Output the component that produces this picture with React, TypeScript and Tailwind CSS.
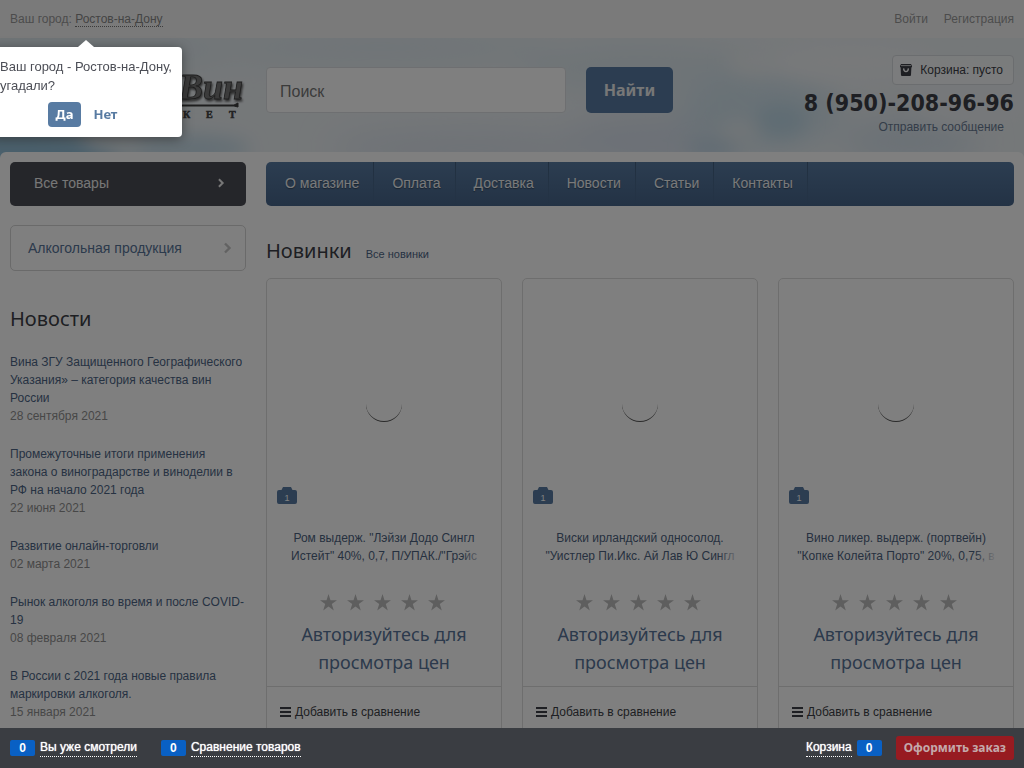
import { FormEvent, useState } from "react";

interface INews {
    title: string;
    date: string;
}
interface IProduct {
    id: number;
    title: string[];
    photos: number;
}

const MENU = ["О магазине", "Оплата", "Доставка", "Новости", "Статьи", "Контакты"];

const NEWS: INews[] = [
    { title: "Вина ЗГУ Защищенного Географического Указания» – категория качества вин России", date: "28 сентября 2021" },
    { title: "Промежуточные итоги применения закона о виноградарстве и виноделии в РФ на начало 2021 года", date: "22 июня 2021" },
    { title: "Развитие онлайн-торговли", date: "02 марта 2021" },
    { title: "Рынок алкоголя во время и после COVID-19", date: "08 февраля 2021" },
    { title: "В России с 2021 года новые правила маркировки алкоголя.", date: "15 января 2021" },
];

const PRODUCTS: IProduct[] = [
    { id: 1, title: ["Ром выдерж. \"Лэйзи Додо Сингл", "Истейт\" 40%, 0,7, П/УПАК./\"Грэйс"], photos: 1 },
    { id: 2, title: ["Виски ирландский односолод.", "\"Уистлер Пи.Икс. Ай Лав Ю Сингл"], photos: 1 },
    { id: 3, title: ["Вино ликер. выдерж. (портвейн)", "\"Копке Колейта Порто\" 20%, 0,75, в"], photos: 1 },
];

const Sky = () => (
    <svg className="absolute inset-0 h-full w-full" viewBox="0 0 1024 124" preserveAspectRatio="none" aria-hidden="true">
        <defs>
            <filter id="soft" x="-50%" y="-100%" width="200%" height="300%"><feGaussianBlur stdDeviation="16" /></filter>
            <filter id="puff" x="-50%" y="-100%" width="200%" height="300%"><feGaussianBlur stdDeviation="9" /></filter>
        </defs>
        <rect width="1024" height="124" fill="#ebf0f3" />
        <g filter="url(#soft)" fill="#dde8ee">
            <ellipse cx="40" cy="20" rx="110" ry="34" />
            <ellipse cx="150" cy="12" rx="80" ry="18" />
            <ellipse cx="380" cy="10" rx="170" ry="16" />
            <ellipse cx="470" cy="112" rx="140" ry="18" fill="#dbe3ed" />
            <ellipse cx="650" cy="105" rx="90" ry="26" fill="#d8e1ed" />
            <ellipse cx="640" cy="30" rx="120" ry="26" />
            <ellipse cx="760" cy="75" rx="80" ry="40" fill="#d2e3ed" />
            <ellipse cx="910" cy="105" rx="70" ry="22" fill="#d5e2ec" />
        </g>
        <g filter="url(#puff)">
            <ellipse cx="10" cy="118" rx="110" ry="24" fill="#94c0d8" />
            <ellipse cx="180" cy="112" rx="70" ry="14" fill="#c6dce8" />
            <ellipse cx="115" cy="104" rx="30" ry="10" fill="#e2e9ec" />
            <ellipse cx="780" cy="84" rx="26" ry="16" fill="#bfd9e7" />
            <ellipse cx="712" cy="112" rx="26" ry="8" fill="#bfd6e6" />
            <ellipse cx="740" cy="95" rx="20" ry="12" fill="#e3ebef" />
            <ellipse cx="755" cy="24" rx="28" ry="14" fill="#ebf0f2" />
            <ellipse cx="970" cy="60" rx="60" ry="30" fill="#edf1f4" />
            <ellipse cx="850" cy="25" rx="80" ry="18" fill="#f0f3f5" />
        </g>
    </svg>
);

const Logo = () => (
    <svg className="block h-[62px] w-[236px]" viewBox="0 0 236 62" role="img" aria-label="Вин кет">
        <g fontFamily="'Liberation Serif', serif" fontWeight="700">
            <text x="169" y="35" fontSize="36" fontStyle="italic" fill="#777" stroke="#3c3c3c" strokeWidth="0.8" className="[filter:drop-shadow(1px_2px_1px_#555)]">Вин</text>
            <g fontSize="10" fill="#444" stroke="#444" strokeWidth="0.5">
                <text x="173" y="54">К</text>
                <text x="196" y="54">Е</text>
                <text x="219" y="54">Т</text>
            </g>
        </g>
        <path d="M120 41H224L228 39V43L224 42H120Z" fill="#3c3c3c" stroke="#3c3c3c" strokeWidth="1" />
    </svg>
);

const BasketIcon = () => (
    <svg className="h-3 w-3" viewBox="0 0 12 12" aria-hidden="true">
        <path d="M1 0H11L12 2V3.2H0V2Z" fill="#3c3e46" />
        <path d="M1 1.6H11" stroke="#fff" strokeWidth="0.7" />
        <path d="M0.6 3H11.4L11 11Q11 12 10 12H2Q1 12 1 11Z" fill="#3c3e46" />
        <path d="M3.6 4.4Q3.8 7.6 6 7.6T8.4 4.4" fill="none" stroke="#fff" strokeWidth="1.3" />
    </svg>
);

const Chevron = ({ className }: { className: string }) => (
    <svg className={className} viewBox="0 0 8 12" fill="none" stroke="currentColor" strokeWidth="2.4" aria-hidden="true">
        <path d="M1.5 1.5L6 6L1.5 10.5" />
    </svg>
);

const Star = () => (
    <svg className="h-[17px] w-[17px]" viewBox="0 0 17 17" fill="#bdbdbd" aria-hidden="true">
        <path d="M8.5 0L10.5 6.2H17L11.8 10.1L13.8 16.4L8.5 12.5L3.2 16.4L5.2 10.1L0 6.2H6.5Z" />
    </svg>
);

const BarsIcon = () => (
    <svg className="h-[10px] w-[11px]" viewBox="0 0 11 10" fill="#3c3e46" aria-hidden="true">
        <path d="M0 0H11V2H0ZM0 4H11V6H0ZM0 8H11V10H0Z" />
    </svg>
);

const PhotoBadge = ({ count }: { count: number }) => (
    <span className="absolute bottom-[25px] left-[10px] h-[17px] w-5">
        <svg className="block h-full w-full" viewBox="0 0 20 17" fill="#587ba2" aria-hidden="true">
            <path d="M6 0H14L15.5 3H18Q20 3 20 5V15Q20 17 18 17H2Q0 17 0 15V5Q0 3 2 3H4.500Z" />
        </svg>
        <span className="absolute inset-0 pt-[4px] text-center text-[9px] leading-[14px] text-white">{count}</span>
    </span>
);

const ProductCard = ({ product }: { product: IProduct }) => (
    <article className="rounded-[5px] border border-[#dcdcdc] bg-white">
        <div className="relative flex h-[250px] items-center justify-center">
            <span className="h-9 w-9 rounded-full border-b border-[#555]" />
            <PhotoBadge count={product.photos} />
        </div>
        <a href="#" className="relative mx-auto block h-9 w-[204px] overflow-hidden text-center text-[12px] leading-[18px] whitespace-nowrap text-[#4d6280]">
            {product.title.map((line) => <span key={line} className="block">{line}</span>)}
            <span className="absolute right-0 bottom-0 h-[18px] w-6 bg-gradient-to-r from-white/0 to-white" />
        </a>
        <div className="mt-[29px] flex justify-center gap-[10px] pr-[3px]">
            {Array(5).fill(1).map((_a, i) => <Star key={`star_${product.id}_${i}`} />)}
        </div>
        <a href="#" className="mx-auto mt-[9px] block w-[190px] text-center font-['Noto_Sans',sans-serif] text-[18px] leading-7 text-[#587498]">Авторизуйтесь для просмотра цен</a>
        <div className="mt-[10px] border-t border-[#dcdcdc] px-[13px] pt-[16px] pb-4">
            <button type="button" className="flex items-center gap-1 text-[12px] leading-[18px] text-[#3c3e46]"><BarsIcon />Добавить в сравнение</button>
        </div>
    </article>
);

const CityPopup = ({ onClose }: { onClose: () => void }) => (
    <div role="dialog" aria-label="Ваш город" className="absolute top-[47px] left-[-10px] z-30 w-48 rounded-[4px] bg-white p-[10px] text-[13px] leading-[19px] text-[#4c4e56] shadow-[0_2px_12px_rgba(0,0,0,0.4)]">
        <span className="absolute -top-[7px] left-[88px] border-x-8 border-b-[7px] border-x-transparent border-b-white" />
        <p className="whitespace-nowrap">Ваш город - Ростов-на-Дону,<br />угадали?</p>
        <div className="mt-[7px] flex justify-center gap-3 pr-[7px] font-['Noto_Sans',sans-serif] leading-[25px] font-bold">
            <button type="button" className="rounded-[4px] bg-[#587ba2] px-2 text-white" onClick={onClose}>Да</button>
            <button type="button" className="text-[#587ba2]" onClick={onClose}>Нет</button>
        </div>
    </div>
);

const BarCounter = ({ children }: { children: number }) => (
    <span className="w-[25px] rounded-[2px] bg-[#0960c4] text-center leading-4 font-bold text-white">{children}</span>
);

const BarLabel = ({ children }: { children: string }) => (
    <span className="border-b border-dotted border-white leading-[17px] [text-shadow:0_0_1px_#fff]">{children}</span>
);

const BottomBar = () => (
    <div className="fixed inset-x-0 bottom-0 z-20 flex h-10 items-center justify-between bg-[#3a3d42] px-[10px] text-[12px] text-white">
        <div className="flex gap-6">
            <a href="#" className="flex items-center gap-[5px]"><BarCounter>{0}</BarCounter><BarLabel>Вы уже смотрели</BarLabel></a>
            <a href="#" className="flex items-center gap-[5px]"><BarCounter>{0}</BarCounter><BarLabel>Сравнение товаров</BarLabel></a>
        </div>
        <div className="flex items-center gap-[14px]">
            <a href="#" className="flex items-center gap-[5px]"><BarLabel>Корзина</BarLabel><BarCounter>{0}</BarCounter></a>
            <button type="button" className="rounded-[3px] bg-[#971b21] px-2 font-['Noto_Sans',sans-serif] leading-6 font-bold text-[#c4a9ab]">Оформить заказ</button>
        </div>
    </div>
);

const App = () => {
    const [popup, setPopup] = useState(true);
    const [query, setQuery] = useState("");

    const search = (event: FormEvent) => event.preventDefault();

    return (
        <div className="relative h-screen overflow-hidden bg-white font-['Liberation_Sans',Arial,sans-serif] text-[12px] leading-[18px] text-[#3c3e46]">
            <div className="flex h-[38px] items-center justify-between bg-[#f5f5f5] px-[10px] text-[#999]">
                <div>Ваш город: <button type="button" className="border-b border-dotted border-[#777] leading-[14px] text-[#888]" onClick={() => setPopup(true)}>Ростов-на-Дону</button></div>
                <div className="flex gap-4">
                    <a href="#">Войти</a>
                    <a href="#">Регистрация</a>
                </div>
            </div>

            <header className="relative h-[122px] overflow-hidden">
                <Sky />
                <div className="relative flex gap-5 px-[10px] pt-[17px]">
                    <a href="#" className="mt-[9px] shrink-0"><Logo /></a>
                    <form className="mt-3 flex gap-5" onSubmit={search}>
                        <input type="search" aria-label="Поиск" placeholder="Поиск" value={query} onChange={({ target }) => setQuery(target.value)} className="h-[46px] w-[300px] rounded-[4px] border border-[#dcdfe2] bg-white px-[13px] pt-[3px] text-[16px] placeholder:text-[#777]" />
                        <button type="submit" className="h-[46px] w-[87px] rounded-[5px] bg-[#587ba2] font-['Noto_Sans',sans-serif] text-[16px] font-bold text-[#eee]">Найти</button>
                    </form>
                    <div className="ml-auto flex flex-col items-end">
                        <a href="#" className="flex h-[30px] items-center gap-2 rounded-[4px] border border-[#d6dade] bg-white/50 px-[7px] pr-[10px]"><BasketIcon />Корзина: пусто</a>
                        <a href="tel:89502089696" className="mt-[5px] font-['DejaVu_Sans_Condensed','DejaVu_Sans',sans-serif] text-[23px] leading-[26px] font-bold whitespace-nowrap">8 (950)-208-96-96</a>
                        <a href="#" className="mt-[2px] mr-[10px] text-[#687a92]">Отправить сообщение</a>
                    </div>
                </div>
            </header>

            <main className="relative -mt-2 flex gap-5 rounded-t-[6px] bg-white px-[10px] pt-[10px]">
                <aside className="w-[236px] shrink-0">
                    <a href="#" className="flex h-11 items-center justify-between rounded-[5px] bg-[#4a4c54] pr-[21px] pb-[2px] pl-6 text-[14px] text-[#eee]">Все товары<Chevron className="h-[10px] w-2" /></a>
                    <a href="#" className="mt-[19px] flex h-[46px] items-center justify-between rounded-[5px] border border-[#d4d4d4] pr-[13px] pl-[17px] text-[14px] text-[#587498]">Алкогольная продукция<Chevron className="h-3 w-[9px] text-[#c4c4c4]" /></a>
                    <h2 className="mt-[34px] font-['Noto_Sans',sans-serif] text-[20px] leading-7">Новости</h2>
                    <ul className="mt-5 flex flex-col gap-5">
                        {NEWS.map((item) => <li key={item.date}>
                            <a href="#" className="block text-[#4d6585]">{item.title}</a>
                            <span className="block text-[#8f8f8f]">{item.date}</span>
                        </li>)}
                    </ul>
                </aside>

                <div className="min-w-0 flex-1">
                    <nav className="h-11 rounded-[5px] bg-gradient-to-b from-[#587ba2] to-[#47658a]">
                        <ul className="flex h-full pl-px text-[14px]">
                            {MENU.map((item) => <li key={item} className="flex">
                                <a href="#" className="flex items-center pr-[14px] pb-[2px] pl-[18px] text-[#f2f4f6] [text-shadow:0_1px_1px_#33475e]">{item}</a>
                                <span className="w-px bg-gradient-to-b from-[#3f5c7c] to-transparent" />
                            </li>)}
                        </ul>
                    </nav>
                    <div className="mt-[31px] flex items-baseline gap-[14px]">
                        <h2 className="font-['Noto_Sans',sans-serif] text-[20px] leading-7">Новинки</h2>
                        <a href="#" className="text-[11px] text-[#4d6585]">Все новинки</a>
                    </div>
                    <div className="mt-[13px] grid grid-cols-3 gap-5">
                        {PRODUCTS.map((product) => <ProductCard key={product.id} product={product} />)}
                    </div>
                </div>
            </main>

            {popup && <div className="fixed inset-0 z-10 bg-black/50" />}
            {popup && <CityPopup onClose={() => setPopup(false)} />}
            <BottomBar />
        </div>
    );
};

export default App;
